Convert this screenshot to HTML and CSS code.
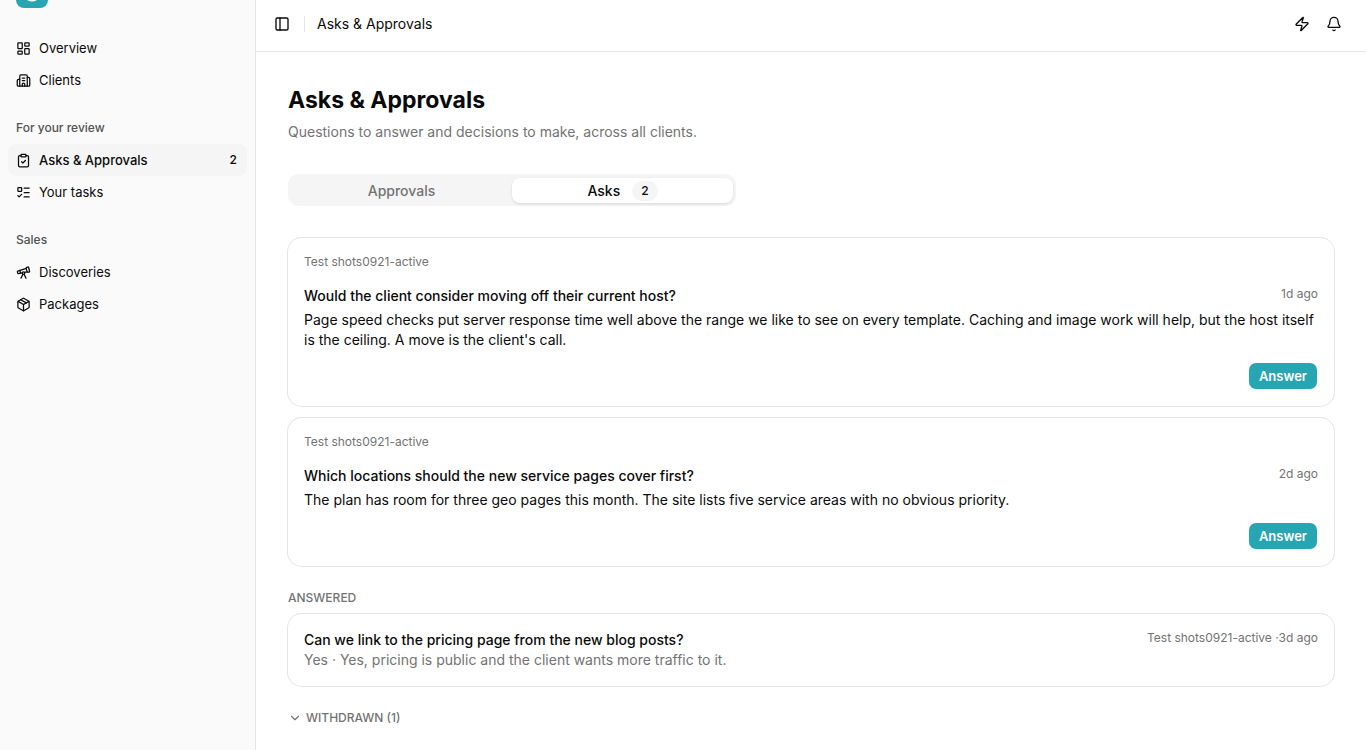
FILE: index.html
```html
<!DOCTYPE html>
<html lang="en">
<head>
  <meta charset="UTF-8" />
  <meta name="viewport" content="width=device-width, initial-scale=1.0" />
  <title>Asks & Approvals</title>
  <link rel="stylesheet" href="styles.css">
</head>
<body>
  <aside class="sidebar">
    <div class="brand">
      <svg class="logo" viewBox="0 0 32 32" aria-hidden="true">
        <rect width="32" height="32" rx="8" fill="#28a5b2" />
        <circle cx="16" cy="17" r="7" fill="none" stroke="#fff" stroke-width="3" />
      </svg>
    </div>

    <nav>
      <div class="nav-group">
        <a href="#"><svg class="icon" viewBox="0 0 24 24"><rect width="7" height="9" x="3" y="3" rx="1"/><rect width="7" height="5" x="14" y="3" rx="1"/><rect width="7" height="9" x="14" y="12" rx="1"/><rect width="7" height="5" x="3" y="16" rx="1"/></svg>Overview</a>
        <a href="#"><svg class="icon" viewBox="0 0 24 24"><path d="M10 12h4M10 8h4M14 21v-3a2 2 0 0 0-4 0v3"/><path d="M6 10H4a2 2 0 0 0-2 2v7a2 2 0 0 0 2 2h16a2 2 0 0 0 2-2V9a2 2 0 0 0-2-2h-2"/><path d="M6 21V5a2 2 0 0 1 2-2h8a2 2 0 0 1 2 2v16"/></svg>Clients</a>
      </div>

      <div class="nav-group">
        <h2>For your review</h2>
        <a href="#" class="active"><svg class="icon" viewBox="0 0 24 24"><rect width="8" height="4" x="8" y="2" rx="1"/><path d="M16 4h2a2 2 0 0 1 2 2v14a2 2 0 0 1-2 2H6a2 2 0 0 1-2-2V6a2 2 0 0 1 2-2h2"/><path d="m9 14 2 2 4-4"/></svg>Asks & Approvals <span class="count">2</span></a>
        <a href="#"><svg class="icon" viewBox="0 0 24 24"><path d="M13 5h8M13 12h8M13 19h8"/><path d="m3 17 2 2 4-4"/><rect x="3" y="4" width="6" height="6" rx="1"/></svg>Your tasks</a>
      </div>

      <div class="nav-group">
        <h2>Sales</h2>
        <a href="#"><svg class="icon" viewBox="0 0 24 24"><path d="m10.065 12.493-6.18 1.318a.934.934 0 0 1-1.108-.702l-.537-2.15a1.07 1.07 0 0 1 .691-1.265l13.504-4.44"/><path d="m13.56 11.747 4.332-.924"/><path d="m16 21-3.105-6.21"/><path d="M16.485 5.94a2 2 0 0 1 1.455-2.425l1.09-.272a1 1 0 0 1 1.212.727l1.515 6.06a1 1 0 0 1-.727 1.213l-1.09.272a2 2 0 0 1-2.425-1.455z"/><path d="m6.158 8.633 1.114 4.456"/><path d="m8 21 3.105-6.21"/><circle cx="12" cy="13" r="2"/></svg>Discoveries</a>
        <a href="#"><svg class="icon" viewBox="0 0 24 24"><path d="M11 21.73a2 2 0 0 0 2 0l7-4A2 2 0 0 0 21 16V8a2 2 0 0 0-1-1.73l-7-4a2 2 0 0 0-2 0l-7 4A2 2 0 0 0 3 8v8a2 2 0 0 0 1 1.73z"/><path d="M12 22V12"/><path d="M3.29 7 12 12l8.71-5"/><path d="m7.5 4.27 9 5.15"/></svg>Packages</a>
      </div>
    </nav>
  </aside>

  <div class="page">
    <header class="topbar">
      <button type="button" class="icon-btn" aria-label="Toggle sidebar"><svg class="icon" viewBox="0 0 24 24"><rect width="18" height="18" x="3" y="3" rx="2"/><path d="M9 3v18"/></svg></button>
      <span class="divider"></span>
      <span class="crumb">Asks & Approvals</span>
      <button type="button" class="icon-btn" aria-label="Quick actions"><svg class="icon" viewBox="0 0 24 24"><path d="M4 14a1 1 0 0 1-.78-1.63l9.9-10.2a.5.5 0 0 1 .86.46l-1.92 6.02A1 1 0 0 0 13 10h7a1 1 0 0 1 .78 1.63l-9.9 10.2a.5.5 0 0 1-.86-.46l1.92-6.02A1 1 0 0 0 11 14z"/></svg></button>
      <button type="button" class="icon-btn" aria-label="Notifications"><svg class="icon" viewBox="0 0 24 24"><path d="M10.268 21a2 2 0 0 0 3.464 0"/><path d="M3.262 15.326A1 1 0 0 0 4 17h16a1 1 0 0 0 .74-1.673C19.41 13.956 18 12.499 18 8A6 6 0 0 0 6 8c0 4.499-1.411 5.956-2.738 7.326"/></svg></button>
    </header>

    <main>
      <h1>Asks & Approvals</h1>
      <p class="subtitle">Questions to answer and decisions to make, across all clients.</p>

      <div class="tabs" role="tablist">
        <button type="button" role="tab" aria-selected="false">Approvals</button>
        <button type="button" role="tab" aria-selected="true">Asks <span class="badge">2</span></button>
      </div>

      <section class="asks">
        <article class="card">
          <p class="meta">Test shots0921-active</p>
          <div class="card-head">
            <h3>Would the client consider moving off their current host?</h3>
            <span class="meta">1d ago</span>
          </div>
          <p class="detail">Page speed checks put server response time well above the range we like to see on every template. Caching and image work will help, but the host itself is the ceiling. A move is the client's call.</p>
          <button type="button" class="answer">Answer</button>
        </article>

        <article class="card">
          <p class="meta">Test shots0921-active</p>
          <div class="card-head">
            <h3>Which locations should the new service pages cover first?</h3>
            <span class="meta">2d ago</span>
          </div>
          <p class="detail">The plan has room for three geo pages this month. The site lists five service areas with no obvious priority.</p>
          <button type="button" class="answer">Answer</button>
        </article>
      </section>

      <section class="answered">
        <h2 class="section-label">Answered</h2>
        <article class="card">
          <div class="card-head">
            <h3>Can we link to the pricing page from the new blog posts?</h3>
            <span class="meta">Test shots0921-active ·3d ago</span>
          </div>
          <p class="muted">Yes · Yes, pricing is public and the client wants more traffic to it.</p>
        </article>
      </section>

      <button type="button" class="section-label withdrawn" aria-expanded="false"><svg class="icon" viewBox="0 0 24 24"><path d="m6 9 6 6 6-6"/></svg>Withdrawn (1)</button>
    </main>
  </div>
</body>
</html>
```
FILE: styles.css
```css
* { box-sizing: border-box; }
body { margin: 0; min-height: 100vh; display: flex; font: 14px/20px Inter, sans-serif; color: #0a0a0a; background: #fff; }
h1, h2, h3, p { margin: 0; }
button { font: inherit; color: inherit; border: 0; padding: 0; background: none; cursor: pointer; }
a { color: inherit; text-decoration: none; }
.icon { width: 16px; height: 16px; flex: none; fill: none; stroke: currentColor; stroke-width: 2; stroke-linecap: round; stroke-linejoin: round; }

.sidebar { width: 256px; flex: none; background: #fafafa; border-right: 1px solid #e5e5e5; }
.brand { height: 8px; margin-bottom: 24px; padding: 0 16px; display: flex; align-items: flex-end; overflow: hidden; }
.logo { width: 32px; height: 32px; flex: none; }
nav { display: flex; flex-direction: column; gap: 16px; padding: 0 8px; }
.nav-group h2 { padding: 0 8px; font-size: 12px; line-height: 32px; font-weight: 500; color: #525252; }
.nav-group a { display: flex; align-items: center; gap: 8px; height: 32px; padding: 0 8px; border-radius: 8px; font-size: 13px; }
.nav-group a:hover, .nav-group .active { background: #f5f5f5; }
.nav-group .active { font-weight: 500; }
.nav-group .icon { width: 15px; height: 15px; }
.count { margin-left: auto; padding: 0 2px; font-size: 12px; }

.page { flex: 1; min-width: 0; }
.topbar { display: flex; align-items: center; padding: 8px 16px 11px 10px; border-bottom: 1px solid #e5e5e5; }
.icon-btn { display: flex; align-items: center; justify-content: center; width: 32px; height: 32px; border-radius: 8px; }
.divider { width: 1px; height: 16px; margin: 0 12px 0 6px; background: #e5e5e5; }
.crumb { margin-right: auto; }

main { padding: 32px; }
h1 { font-size: 23px; line-height: 32px; font-weight: 700; }
.subtitle { margin-top: 6px; color: #737373; }

.tabs { display: flex; max-width: 448px; height: 32px; margin: 32px 0; padding: 4px 3px 3px; background: #f5f5f5; border-radius: 10px; }
.tabs button { flex: 1; display: flex; align-items: center; justify-content: center; gap: 12px; font-weight: 500; color: #737373; border-radius: 8px; }
.tabs [aria-selected="true"] { color: #0a0a0a; background: #fff; box-shadow: 0 1px 3px rgba(0,0,0,0.12); }
.badge { padding: 0 9px; font-size: 12px; background: #f5f5f5; border-radius: 10px; }

.card { padding: 16px; border-radius: 14px; box-shadow: 0 0 0 1px #e5e5e5; }
.asks { display: flex; flex-direction: column; gap: 12px; }
.asks .card { display: flex; flex-direction: column; }
.asks .card-head { margin: 16px 0 4px; }
.card-head { display: flex; align-items: flex-start; justify-content: space-between; gap: 12px; }
h3 { font-size: 14px; line-height: 20px; font-weight: 500; }
.meta { font-size: 12px; line-height: 16px; color: #737373; }
.muted { color: #737373; }
.answer { align-self: flex-end; height: 28px; margin-top: 12px; padding: 0 10px; border: 1px solid transparent; border-radius: 8px; background: #28a5b2; background-clip: padding-box; color: #fff; font-size: 13px; font-weight: 600; }

.answered { margin: 24px 0; }
.section-label { font-size: 12px; line-height: 16px; font-weight: 500; color: #737373; text-transform: uppercase; }
h2.section-label { margin-bottom: 8px; }
.withdrawn { display: flex; align-items: center; gap: 4px; }
.withdrawn .icon { width: 14px; height: 14px; }
```
